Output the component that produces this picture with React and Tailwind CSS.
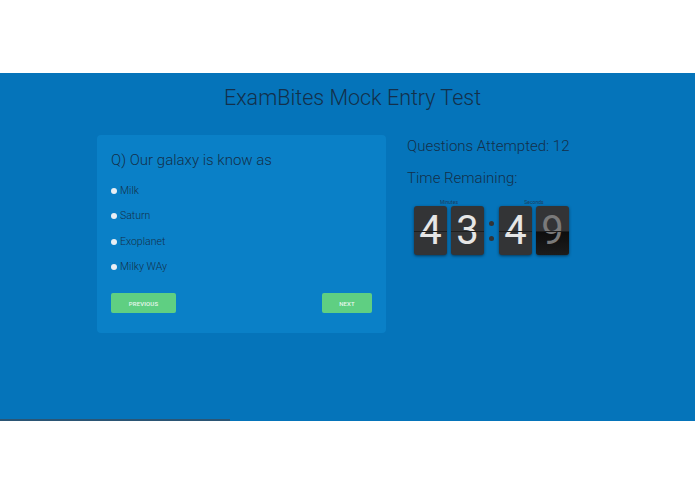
import React from 'react';

const options = ['Milk', 'Saturn', 'Exoplanet', 'Milky WAy'];

const FlipDigit = ({ value, flipping }) => (
  <div className="relative w-[33px] h-[49px] rounded-[3px] bg-[#333436] shadow-[0_1px_3px_rgba(0,0,0,0.5)] flex items-center justify-center overflow-hidden">
    {flipping && <div className="absolute left-0 right-0 bottom-0 h-1/2 bg-gradient-to-b from-[#0d0d0d] to-[#1c1c1c]" />}
    <span className={`relative text-[40px] leading-none font-normal ${flipping ? 'text-[#7a7a7a]' : 'text-[#e6e6e6]'}`}>{value}</span>
    <div className="absolute left-0 right-0 top-1/2 h-px bg-[#1e1e1e]" />
  </div>
);

const App = () => {
  return (
    <div className="w-[695px] h-[494px] bg-white font-['Roboto',sans-serif]">
      <div className="h-[73px]" />
      <div className="relative h-[348px] bg-[#0574ba]">
        <h1 className="pt-[11px] pl-[10px] text-center text-[21.5px] font-light text-[#13304b] leading-[28px]">ExamBites Mock Entry Test</h1>

        <div className="flex mt-[23px]">
          <div className="ml-[97px] w-[289px] h-[198px] rounded-[4px] bg-[#0a80c7] pl-[14px] pr-[14px] pt-[15px]">
            <p className="text-[15px] font-light text-[#13304b] leading-[20px]">Q) Our galaxy is know as</p>
            <div className="mt-[8px] flex flex-col">
              {options.map((o) => (
                <label key={o} className="flex items-center h-[25.5px] text-[10.5px] font-light text-[#13304b]">
                  <span className="w-[6px] h-[6px] rounded-full bg-[#e8eef4] mr-[3px]" />
                  {o}
                </label>
              ))}
            </div>
            <div className="mt-[13px] flex justify-between">
              <button className="w-[65px] h-[20px] rounded-[2px] bg-[#5fcf82] text-[6px] font-medium tracking-wide text-[#e8f7ee]">PREVIOUS</button>
              <button className="w-[50px] h-[20px] rounded-[2px] bg-[#5fcf82] text-[6px] font-medium tracking-wide text-[#e8f7ee]">NEXT</button>
            </div>
          </div>

          <div className="ml-[21px] pt-[1px]">
            <p className="text-[15px] font-light text-[#13304b] leading-[20px]">Questions Attempted: 12</p>
            <p className="mt-[12px] text-[15px] font-light text-[#13304b] leading-[20px]">Time Remaining:</p>
            <div className="ml-[7px] mt-[10px] flex">
              <div className="flex flex-col items-center">
                <span className="text-[5px] text-[#1c3c5c] leading-[8px]">Minutes</span>
                <div className="flex gap-[4px]">
                  <FlipDigit value="4" />
                  <FlipDigit value="3" />
                </div>
              </div>
              <div className="w-[15px] pt-[23px] flex flex-col items-center gap-[10px]">
                <span className="w-[5px] h-[5px] rounded-full bg-[#333436]" />
                <span className="w-[5px] h-[5px] rounded-full bg-[#333436]" />
              </div>
              <div className="flex flex-col items-center">
                <span className="text-[5px] text-[#1c3c5c] leading-[8px]">Seconds</span>
                <div className="flex gap-[4px]">
                  <FlipDigit value="4" />
                  <FlipDigit value="9" flipping />
                </div>
              </div>
            </div>
          </div>
        </div>

        <div className="absolute left-0 bottom-0 w-[230px] h-[2px] bg-[#2b5574]" />
      </div>
    </div>
  );
};

export default App;
